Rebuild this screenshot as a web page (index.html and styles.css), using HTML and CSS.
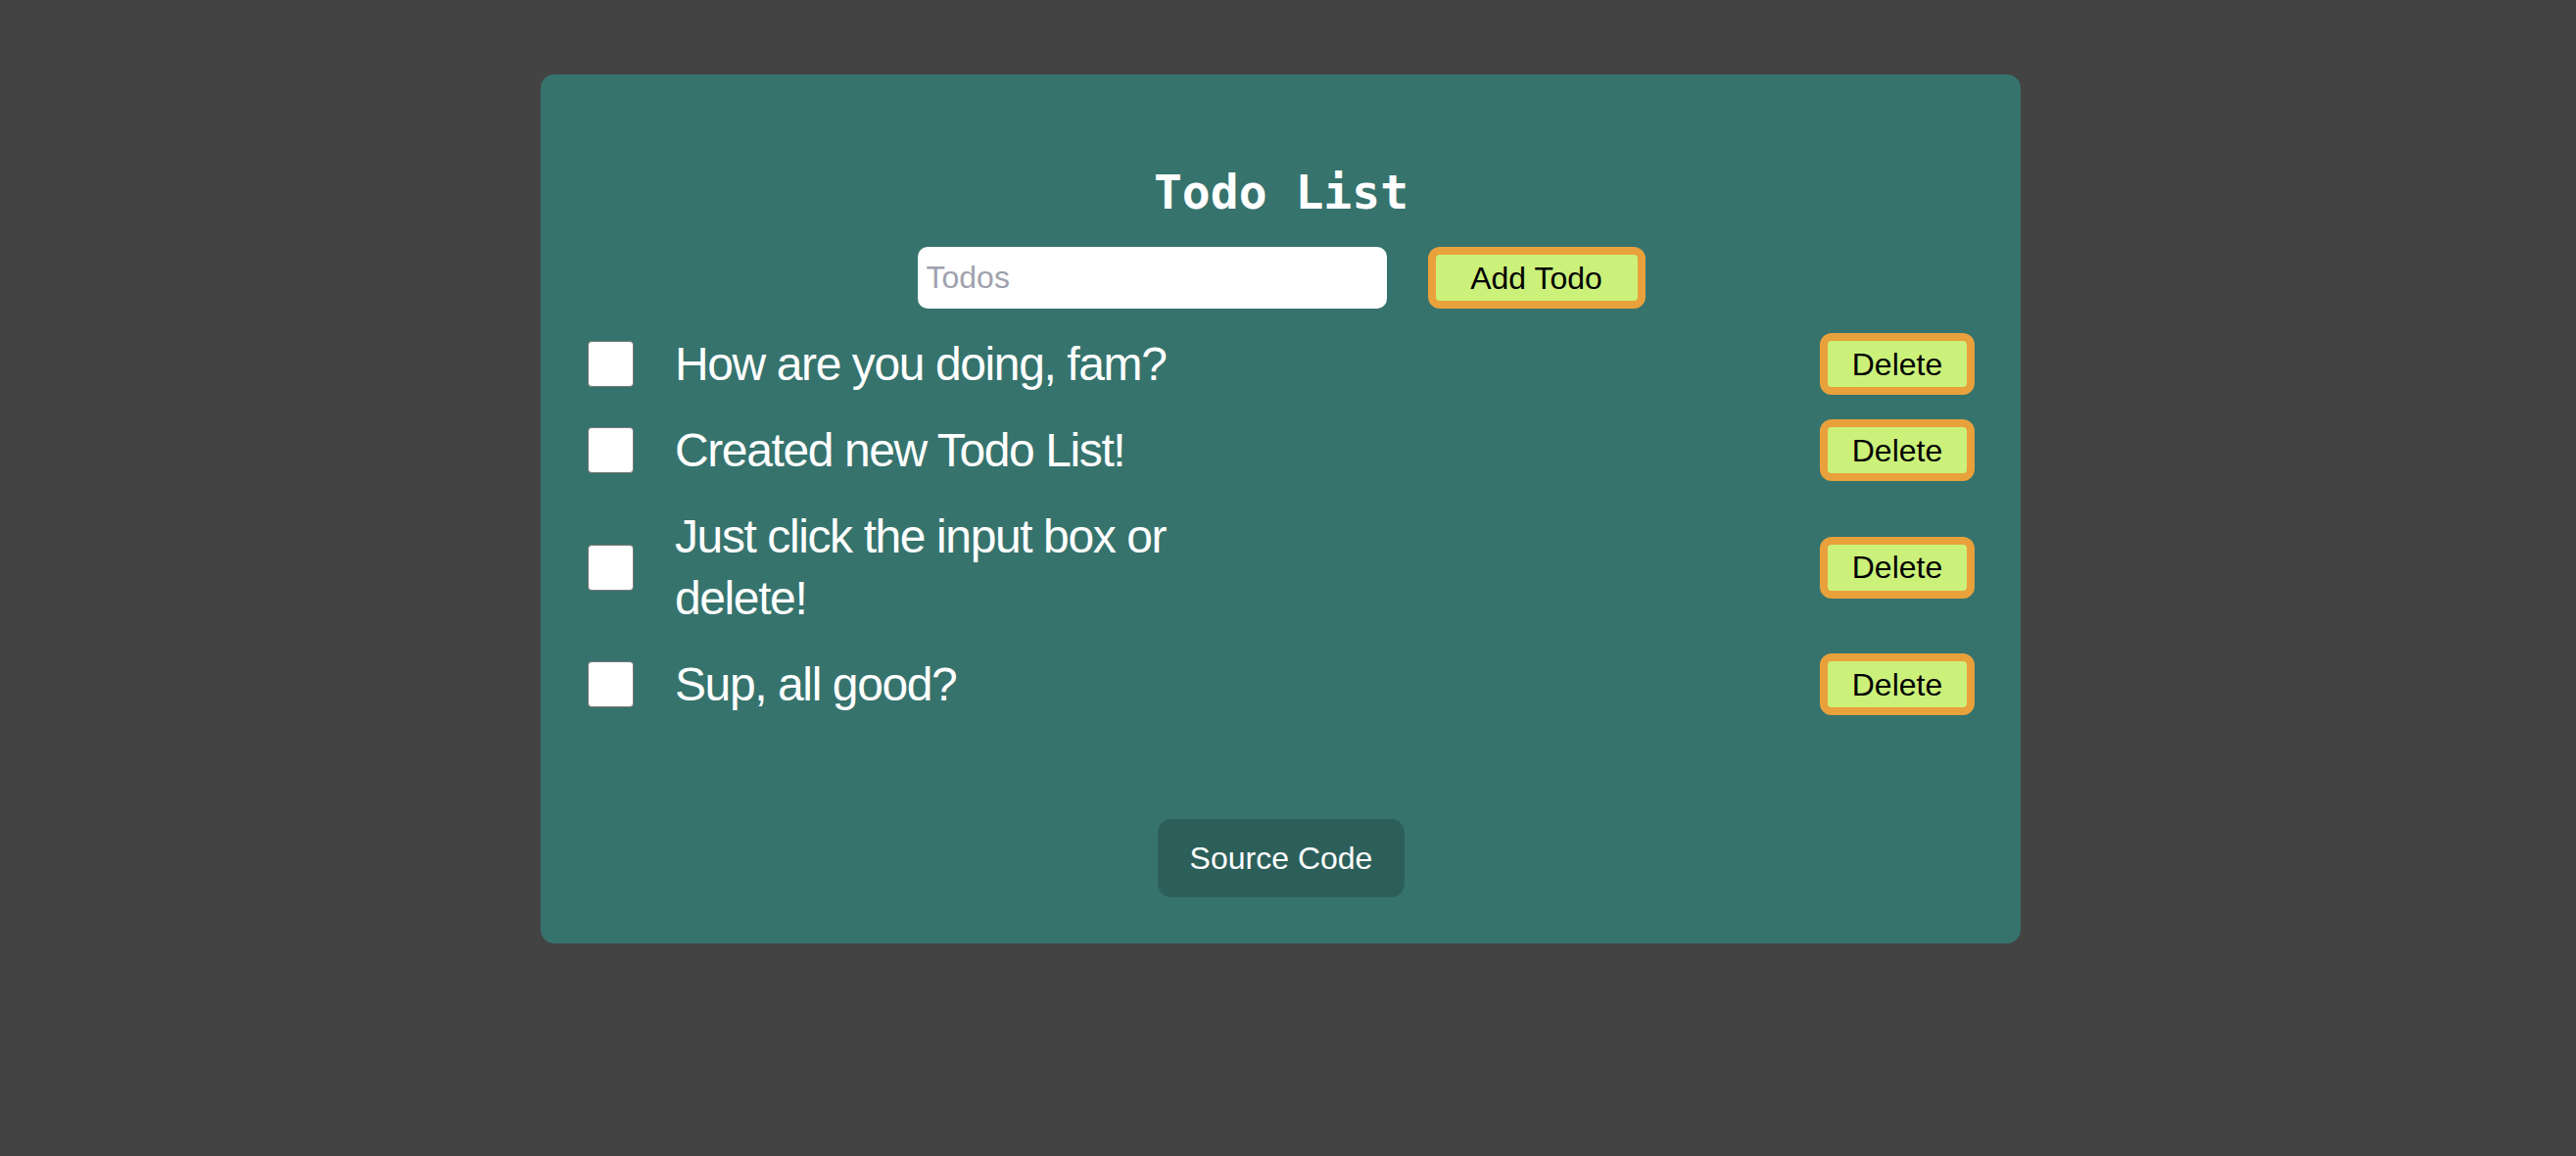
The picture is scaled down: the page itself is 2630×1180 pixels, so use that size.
FILE: index.html
```html
<!DOCTYPE html>
<html lang="en">
<head>
<meta charset="utf-8">
<title>Todo List</title>
<link rel="stylesheet" href="styles.css">
</head>
<body>
<div class="page">
  <main class="card">
    <h1 class="title">Todo List</h1>
    <form class="add-form">
      <input class="todo-input" type="text" placeholder="Todos">
      <button class="btn btn-add" type="button">Add Todo</button>
    </form>
    <ul class="todo-list">
      <li class="todo-item">
        <input class="check" type="checkbox">
        <span class="todo-text">How are you doing, fam?</span>
        <button class="btn btn-delete" type="button">Delete</button>
      </li>
      <li class="todo-item">
        <input class="check" type="checkbox">
        <span class="todo-text">Created new Todo List!</span>
        <button class="btn btn-delete" type="button">Delete</button>
      </li>
      <li class="todo-item">
        <input class="check" type="checkbox">
        <span class="todo-text">Just click the input box or delete!</span>
        <button class="btn btn-delete" type="button">Delete</button>
      </li>
      <li class="todo-item">
        <input class="check" type="checkbox">
        <span class="todo-text">Sup, all good?</span>
        <button class="btn btn-delete" type="button">Delete</button>
      </li>
    </ul>
    <div class="footer">
      <a class="source-btn" href="#">Source Code</a>
    </div>
  </main>
</div>
</body>
</html>
```

FILE: styles.css
```css
html, body {
  margin: 0;
  padding: 0;
  background: #434343;
  font-family: "Liberation Sans", Arial, sans-serif;
}

.page {
  padding: 76px 15px 0 0;
  display: flex;
  justify-content: center;
  align-items: flex-start;
}

.card {
  width: 1511px;
  box-sizing: border-box;
  background: #36736d;
  border-radius: 14px;
  padding: 92px 47px 47px 48px;
  display: flex;
  flex-direction: column;
}

.title {
  margin: 0 0 28px 0;
  text-align: center;
  font-family: "DejaVu Sans Mono", monospace;
  font-weight: bold;
  font-size: 48px;
  line-height: 56px;
  color: #ffffff;
}

.add-form {
  display: flex;
  justify-content: center;
  gap: 42px;
  margin: 0 0 25px 0;
}

.todo-input {
  width: 479px;
  height: 63px;
  box-sizing: border-box;
  border: none;
  border-radius: 10px;
  padding: 0 9px;
  font-family: "Liberation Sans", Arial, sans-serif;
  font-size: 32px;
  color: #111;
  background: #ffffff;
  outline: none;
}

.todo-input::placeholder {
  color: #9fa2ae;
}

.btn {
  box-sizing: border-box;
  height: 63px;
  border: 8px solid #e9a13c;
  border-radius: 12px;
  background: #cbf17a;
  color: #000;
  font-family: "Liberation Sans", Arial, sans-serif;
  font-size: 32px;
  line-height: 1;
  cursor: pointer;
}

.btn-add {
  width: 222px;
  padding: 0;
}

.btn-delete {
  width: 158px;
  padding: 0;
  margin-left: auto;
  flex: none;
}

.todo-list {
  list-style: none;
  margin: 0;
  padding: 0;
  display: flex;
  flex-direction: column;
  gap: 25px;
}

.todo-item {
  display: flex;
  align-items: center;
}

.check {
  appearance: none;
  -webkit-appearance: none;
  margin: 0 42px 0 0;
  width: 47px;
  height: 47px;
  box-sizing: border-box;
  background: #ffffff;
  border: 1.5px solid #767676;
  border-radius: 4px;
  flex: none;
}

.todo-text {
  flex: 0 1 560px;
  color: #ffffff;
  font-size: 48px;
  line-height: 63px;
  letter-spacing: -1.4px;
}

.footer {
  display: flex;
  justify-content: center;
  margin-top: 106px;
}

.source-btn {
  width: 252px;
  height: 80px;
  box-sizing: border-box;
  display: flex;
  align-items: center;
  justify-content: center;
  background: #2d5f5a;
  border-radius: 14px;
  color: #ffffff;
  text-decoration: none;
  font-size: 32px;
}
```
